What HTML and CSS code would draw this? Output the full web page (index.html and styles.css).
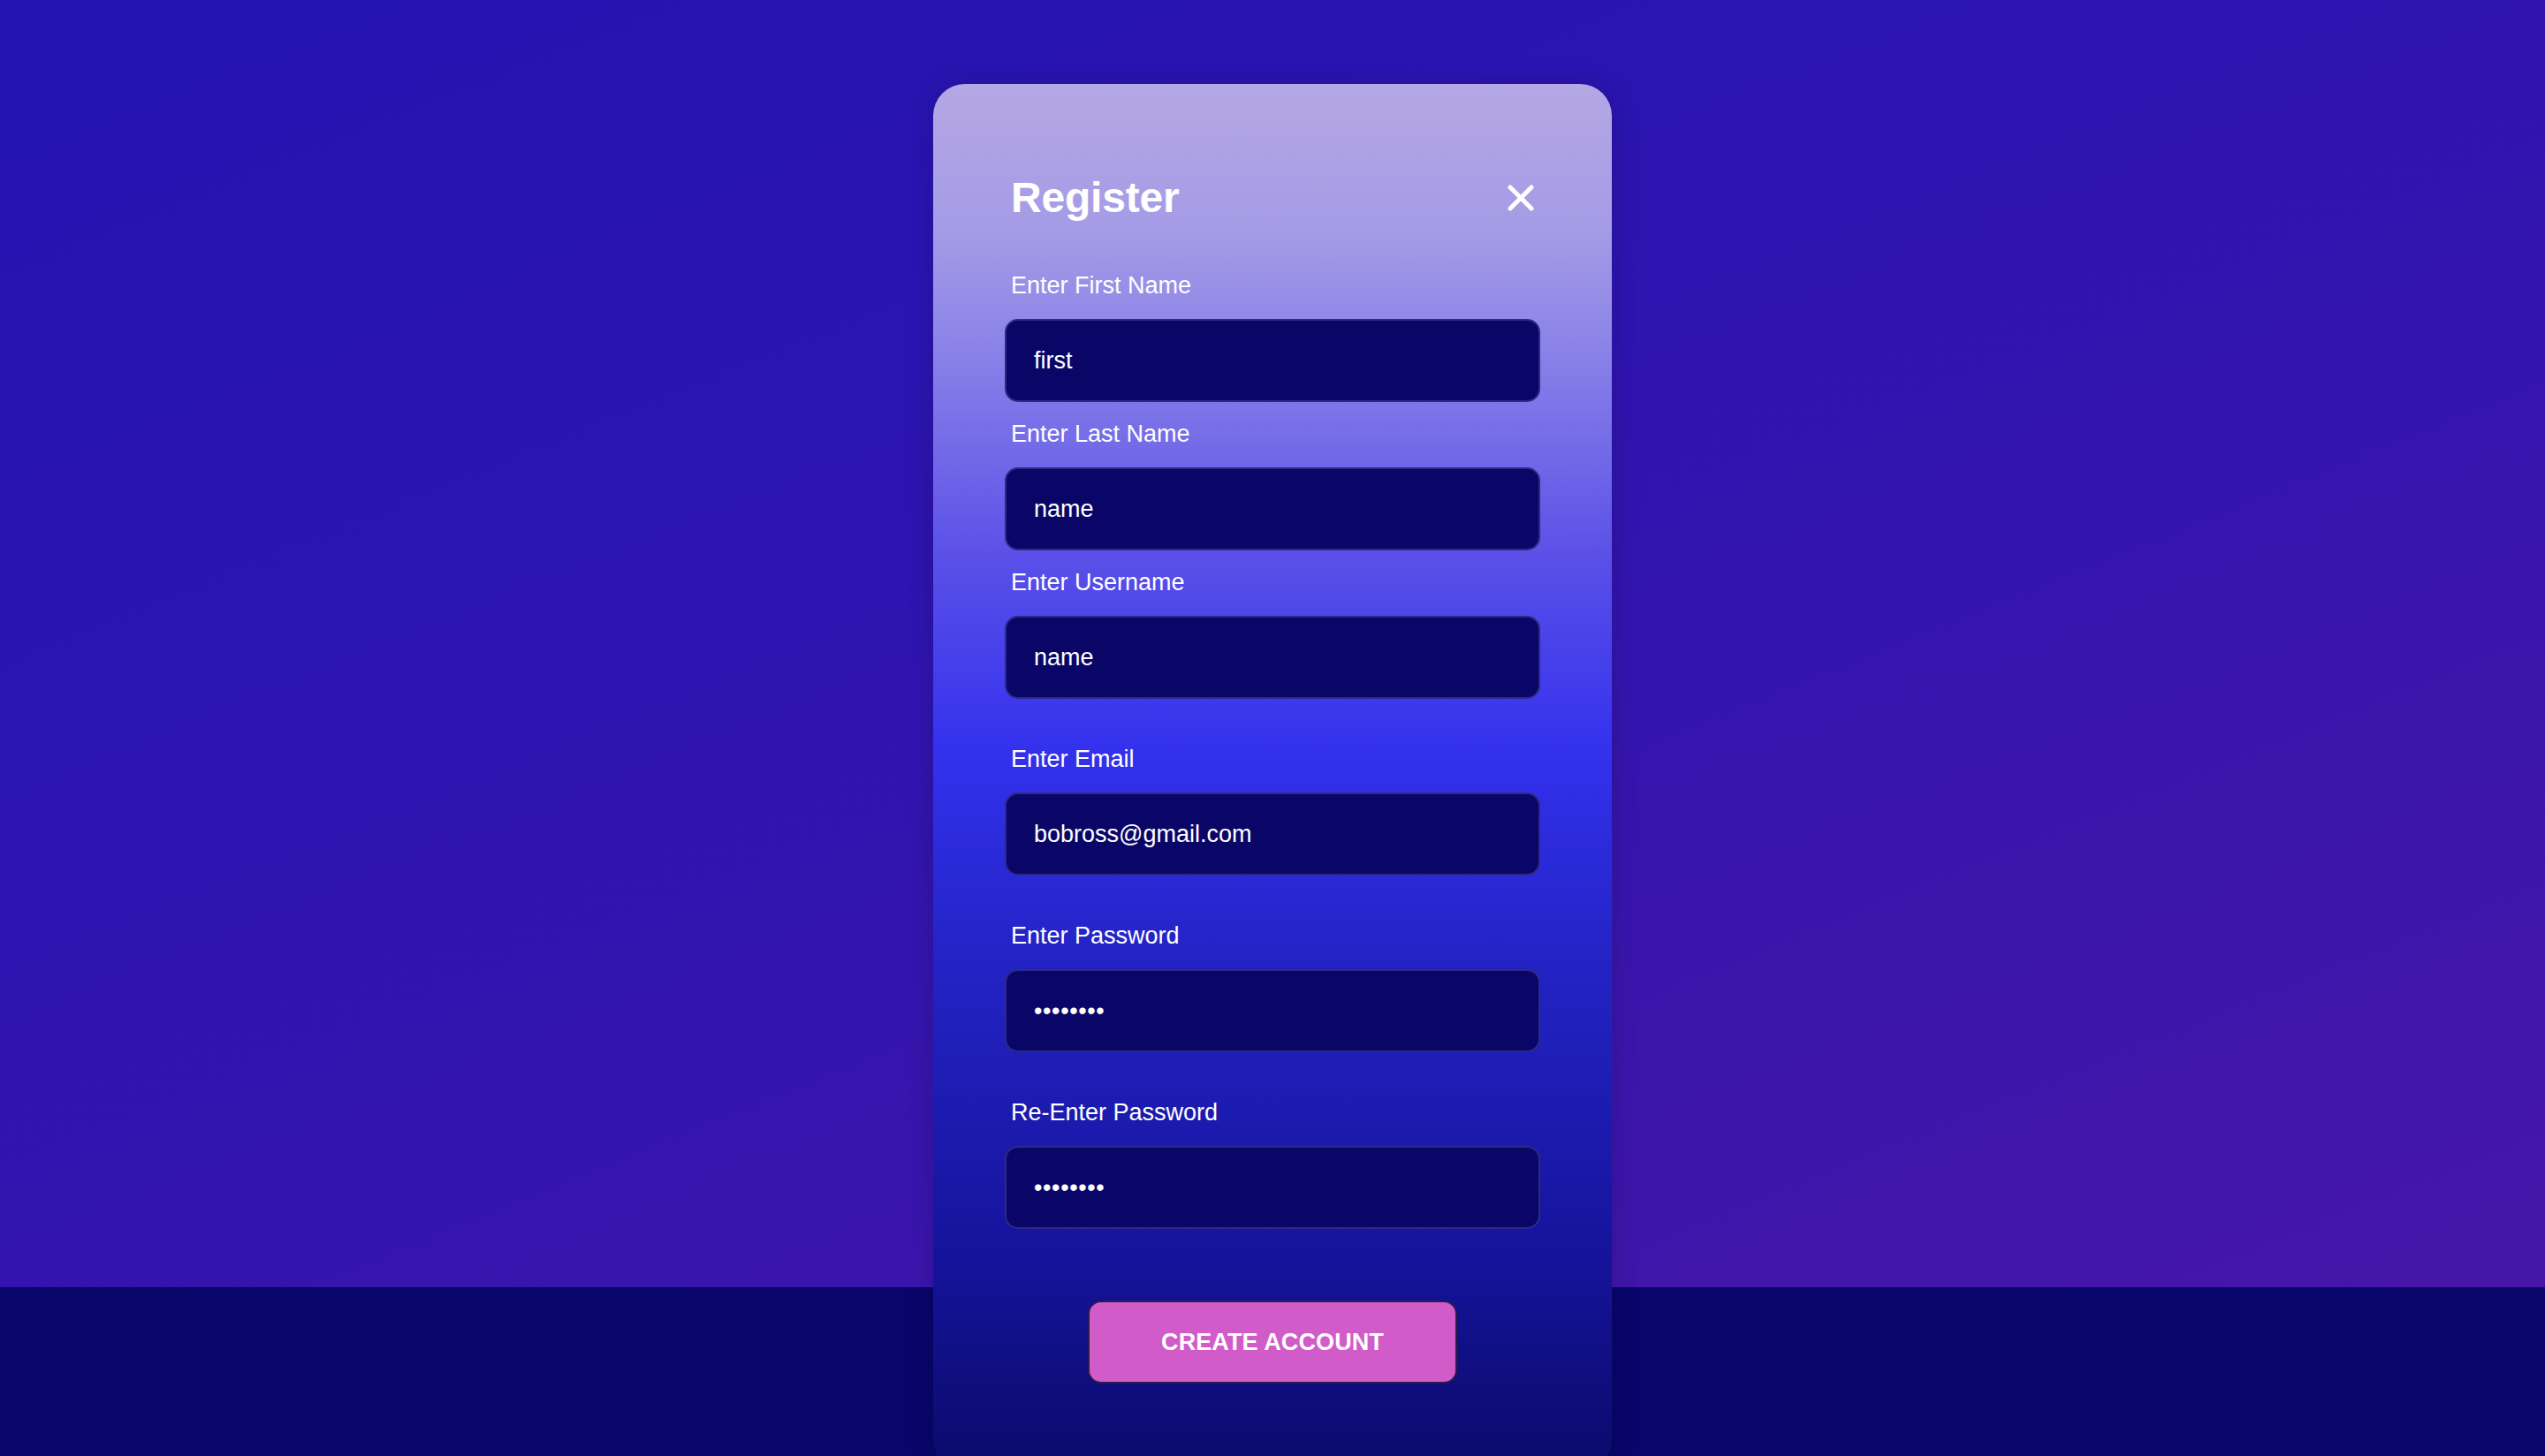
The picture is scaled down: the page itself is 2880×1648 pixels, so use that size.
FILE: index.html
```html
<!DOCTYPE html>
<html lang="en">
<head>
<meta charset="utf-8">
<title>Register</title>
<link rel="stylesheet" href="styles.css">
</head>
<body>
<div class="page">
  <div class="card">
    <div class="card-header">
      <h1 class="title">Register</h1>
      <button class="close" aria-label="Close">
        <svg width="30" height="30" viewBox="0 0 30 30"><path d="M3 3 L27 27 M27 3 L3 27" stroke="#fff" stroke-width="5" stroke-linecap="round" fill="none"/></svg>
      </button>
    </div>
    <form class="form">
      <div class="group">
        <label class="label">Enter First Name</label>
        <input class="field" type="text" value="first">
      </div>
      <div class="group">
        <label class="label">Enter Last Name</label>
        <input class="field" type="text" value="name">
      </div>
      <div class="group">
        <label class="label">Enter Username</label>
        <input class="field" type="text" value="name">
      </div>
      <div class="group group-wide">
        <label class="label">Enter Email</label>
        <input class="field" type="text" value="bobross@gmail.com">
      </div>
      <div class="group group-wide">
        <label class="label">Enter Password</label>
        <input class="field field-secret" type="password" value="password">
      </div>
      <div class="group group-wide">
        <label class="label">Re-Enter Password</label>
        <input class="field field-secret" type="password" value="password">
      </div>
      <div class="actions">
        <button type="button" class="submit">Create Account</button>
      </div>
    </form>
  </div>
</div>
</body>
</html>
```

FILE: styles.css
```css
html, body {
  margin: 0;
  padding: 0;
  height: 1648px;
  overflow: hidden;
}

body {
  font-family: "Liberation Sans", Arial, sans-serif;
  color: #fff;
}

.page {
  height: 1648px;
  overflow: hidden;
  background:
    linear-gradient(to bottom, transparent 1457px, #08066a 1457px),
    linear-gradient(158deg, #2314b2 0%, #2f14b0 45%, #4616a8 100%);
  background-size: 100% 100%, 100% 1457px;
  background-repeat: no-repeat;
  display: flex;
  flex-direction: column;
  align-items: center;
}

.card {
  box-sizing: border-box;
  width: 768px;
  height: 1570px;
  flex-shrink: 0;
  margin-top: 95px;
  padding: 101px 81px 0;
  border-radius: 36px;
  background: linear-gradient(to bottom,
    #b4a7e4 0%,
    #a69ce6 10%,
    #8e86e8 18%,
    #5a50e8 34%,
    #3431ee 48%,
    #2424c8 62%,
    #15139a 85%,
    #0b0a6a 100%);
  box-shadow: 0 0 30px rgba(0, 0, 20, 0.18);
}

.card-header {
  display: flex;
  justify-content: space-between;
  align-items: center;
  height: 56px;
  padding: 0 7px;
  margin-bottom: 55px;
}

.title {
  margin: 0;
  font-size: 48px;
  line-height: 56px;
  font-weight: 700;
  letter-spacing: -0.2px;
}

.close {
  background: none;
  border: 0;
  padding: 0;
  margin: 0;
  width: 30px;
  height: 30px;
  display: flex;
  cursor: pointer;
}

.form {
  display: flex;
  flex-direction: column;
}

.group {
  display: flex;
  flex-direction: column;
  margin-bottom: 20px;
}

.group-wide {
  margin-top: 32px;
}

.label {
  display: block;
  font-size: 27px;
  line-height: 32px;
  padding-left: 7px;
  margin-bottom: 22px;
  letter-spacing: 0;
}

.field {
  box-sizing: border-box;
  width: 606px;
  height: 94px;
  margin: 0;
  padding: 0 31px;
  background: #0a0668;
  border: 2px solid #2d2a84;
  border-radius: 15px;
  color: #fff;
  font-family: "Liberation Sans", Arial, sans-serif;
  font-size: 27px;
  letter-spacing: 0;
  outline: none;
}

.field-secret {
  letter-spacing: 0.6px;
}

.actions {
  display: flex;
  justify-content: center;
  margin-top: 61px;
}

.submit {
  box-sizing: border-box;
  width: 418px;
  height: 94px;
  background: #d05bc9;
  border: 2px solid #2a1d4c;
  border-radius: 15px;
  color: #fff;
  font-family: "Liberation Sans", Arial, sans-serif;
  font-size: 27px;
  font-weight: 700;
  text-transform: uppercase;
  letter-spacing: 0.1px;
  cursor: pointer;
}
```
